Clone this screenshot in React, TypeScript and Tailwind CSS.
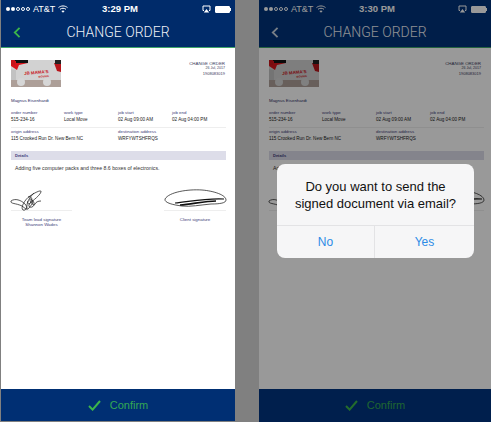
const sans = 'font-["Liberation_Sans",Arial,sans-serif]'

const Signal = () => (
  <span className="flex gap-[1px]">
    <span className="w-[4px] h-[4px] rounded-full bg-white" />
    <span className="w-[4px] h-[4px] rounded-full bg-white" />
    <span className="w-[4px] h-[4px] rounded-full border-[0.5px] border-white" />
    <span className="w-[4px] h-[4px] rounded-full border-[0.5px] border-white" />
    <span className="w-[4px] h-[4px] rounded-full border-[0.5px] border-white" />
  </span>
)

const Wifi = () => (
  <svg width="10" height="8" viewBox="0 0 10 8" fill="none" stroke="white" strokeWidth="1">
    <path d="M0.5 2.6C3 0.4 7 0.4 9.5 2.6" />
    <path d="M2 4.3C3.8 2.9 6.2 2.9 8 4.3" />
    <path d="M5 7.8L3.4 5.9C4.4 5.2 5.6 5.2 6.6 5.9Z" fill="white" stroke="none" />
  </svg>
)

const Airplay = () => (
  <svg width="9" height="8" viewBox="0 0 9 8" fill="none">
    <path d="M2 5.5H1V1H8V5.5H7" stroke="white" strokeWidth="1" />
    <path d="M4.5 4L7.2 7.6H1.8Z" fill="white" />
  </svg>
)

const Battery = () => (
  <span className="flex items-center">
    <span className="w-[15px] h-[7px] border-[0.5px] border-white bg-white rounded-[1px]" />
    <span className="w-[1px] h-[3px] bg-white" />
  </span>
)

const Logo = () => (
  <svg width="50" height="27" viewBox="0 0 50 27" className="block">
    <rect width="50" height="27" fill="#d2d2d2" />
    <rect y="20" width="50" height="7" fill="#ad9f98" />
    <path d="M0 0H17V3L8 5L6 10L0 6Z" fill="#d8131a" />
    <path d="M0 0H17V3H5V1H0Z" fill="#111" />
    <path d="M0 0H4V5H0Z" fill="#c9141a" />
    <path d="M43 3H50V12L46 11Z" fill="#b8141a" />
    <path d="M44 0H50V4H44Z" fill="#222" />
    <path d="M0 9L5 10L5 20H0Z" fill="#c2c2c2" />
    <circle cx="10" cy="22" r="4" fill="#d6d6d6" />
    <circle cx="36" cy="22" r="4" fill="#d6d6d6" />
    <g transform="rotate(-5 25 12)">
      <text x="13" y="14" fontSize="4.4" fontWeight="700" fill="#c8141c" fontFamily="Liberation Sans">JB MAMA&apos;S</text>
      <text x="27" y="18" fontSize="2.6" fontWeight="700" fill="#c8141c" fontFamily="Liberation Sans">MOVING</text>
    </g>
  </svg>
)

const LeadSignature = () => (
  <svg width="34" height="24" viewBox="0 0 34 24" fill="none" stroke="#111" strokeWidth="0.7" className="-ml-px">
    <path d="M1 12C5 9 11 11 15 15C18 18 16 22 13 21C10 19 15 10 20 7C24 4 32 0 31 3C29 8 20 13 19 16C18 19 23 19 24 16C25 13 21 9 20 10C19 12 24 18 25 15C26 13 28 12 31 12" />
    <path d="M1 12C0 15 6 14 12 17C15 19 17 22 19 19C21 16 24 14 22 11" />
    <path d="M24 4C20 8 16 13 17 20" />
    <path d="M18 8C21 7 23 9 21 13C19 16 17 15 18 12" />
  </svg>
)

const ClientSignature = () => (
  <svg width="64" height="20" viewBox="0 0 64 20" fill="none" stroke="#111" strokeWidth="0.7">
    <path d="M1 10C5 3 24 0 38 1C50 2 62 6 62 11C62 14 56 15 47 15C36 16 26 18 18 17C10 16 0 14 1 10Z" />
    <path d="M11 14C24 13 40 9 60 10" strokeWidth="1.2" />
    <path d="M16 16C28 15 42 12 52 12" strokeWidth="1.6" />
  </svg>
)

const Field = ({ label, value, w }: { label: string; value: string; w: string }) => (
  <div className={`${w} h-[15px]`}>
    <div className="text-[4.4px] leading-[6px] text-[#3c3c78]">{label}</div>
    <div className="text-[4.6px] leading-[7px] text-[#222]">{value}</div>
  </div>
)

const OrderDocument = () => (
  <div className="flex-1 bg-white pt-[12px] px-[10px]">
    <div className="flex justify-between">
      <Logo />
      <div className="text-right pt-[1px] text-[#3c3c60]">
        <div className="text-[4.4px] leading-[5px]">CHANGE ORDER</div>
        <div className="text-[3.6px] leading-[5px]">26 Jul, 2017</div>
        <div className="text-[4px] leading-[5px]">1908083019</div>
      </div>
    </div>
    <div className="mt-[11px] text-[4.4px] leading-[6px] text-[#2c2c64]">Magnus Eisenhardt</div>
    <div className="mt-[6px] flex border-b border-[#eeeeee] pb-[2px] w-[215px]">
      <Field label="order number" value="515-234-16" w="w-[53px]" />
      <Field label="work type" value="Local Move" w="w-[54px]" />
      <Field label="job start" value="02 Aug 09:00 AM" w="w-[54px]" />
      <Field label="job end" value="02 Aug 04:00 PM" w="w-[54px]" />
    </div>
    <div className="mt-[1px] flex w-[215px]">
      <Field label="origin address" value="115 Crooked Run Dr. New Bern NC" w="w-[107px]" />
      <Field label="destination address" value="WRFYWTSHFRQS" w="w-[108px]" />
    </div>
    <div className="mt-[7px] w-[215px] h-[9px] bg-[#dddde9] pl-[4px] text-[4px] leading-[9px] font-bold text-[#3c3c78]">Details</div>
    <div className="mt-[5px] pl-[4px] text-[5.2px] leading-[6px] text-[#333]">Adding five computer packs and three 8.6 boxes of electronics.</div>
    <div className="mt-[18px] flex justify-between w-[215px]">
      <div className="w-[61px]">
        <div className="h-[22px] border-b border-[#eeeeee]">
          <LeadSignature />
        </div>
        <div className="mt-[6px] text-center text-[4.4px] leading-[5px] text-[#3c3c78]">
          <div>Team lead signature</div>
          <div>Shannon Wades</div>
        </div>
      </div>
      <div className="w-[62px]">
        <div className="h-[22px] border-b border-[#eeeeee]">
          <ClientSignature />
        </div>
        <div className="mt-[6px] text-center text-[4.4px] leading-[5px] text-[#3c3c78]">Client signature</div>
      </div>
    </div>
  </div>
)

const EmailDialog = () => (
  <div className="absolute left-[18px] top-[164px] w-[197px] h-[94px] rounded-[8px] bg-[#f6f6f7] flex flex-col">
    <div className="h-[61px] flex flex-col justify-center items-center text-[13px] leading-[17px] text-[#111]">
      <div>Do you want to send the</div>
      <div>signed document via email?</div>
    </div>
    <div className="flex-1 flex border-t border-[#e3e3e5] text-[12px] text-[#2c8be6]">
      <div className="w-[98px] border-r border-[#e3e3e5] flex items-center justify-center">No</div>
      <div className="flex-1 flex items-center justify-center">Yes</div>
    </div>
  </div>
)

const Phone = ({ time, width, dimmed }: { time: string; width: string; dimmed?: boolean }) => (
  <div className={`relative ${width} ${dimmed ? 'h-[422px]' : 'h-[421px]'} flex flex-col`}>
    <div className={`${dimmed ? 'bg-[#00327a]' : 'bg-[#002b6a]'} h-[48px] shrink-0 text-white border-b border-[#3fa66a]`}>
      <div className="h-[18px] flex items-center justify-between pl-[5px] pr-[4px] relative">
        <div className="flex items-center gap-[3px]">
          <Signal />
          <span className="text-[9px] leading-none">AT&amp;T</span>
          <Wifi />
        </div>
        <span className="absolute left-[4px] right-0 text-center text-[9.5px] font-bold leading-none">{time}</span>
        <div className="flex items-center gap-[4px]">
          <Airplay />
          <Battery />
        </div>
      </div>
      <div className="h-[29px] relative flex items-center justify-center font-['Roboto',sans-serif] font-light text-[14px] text-[#eef1f6]">
        <svg className="absolute left-[12px] top-[9px]" width="8" height="11" viewBox="0 0 8 12" fill="none" stroke={dimmed ? '#c8d4e0' : '#3cb54a'} strokeWidth="2">
          <path d="M6.8 1L1.6 6L6.8 11" />
        </svg>
        CHANGE ORDER
      </div>
    </div>
    <OrderDocument />
    <div className={`${dimmed ? 'h-[33px] bg-[#003580]' : 'h-[32px] bg-[#002f73]'} shrink-0 flex items-center justify-center gap-[9px] text-[11px] text-[#34a853]`}>
      <svg width="13" height="11" viewBox="0 0 13 11" fill="none" stroke="#3cb54a" strokeWidth="2">
        <path d="M1 6L4.6 9.6L12 1" />
      </svg>
      Confirm
    </div>
    {dimmed && <div className="absolute inset-0 bg-black/40" />}
    {dimmed && <EmailDialog />}
  </div>
)

const App = () => (
  <div className={`w-[491px] h-[422px] overflow-hidden bg-[#808080] flex pl-px ${sans}`}>
    <Phone time="3:29 PM" width="w-[234px]" />
    <div className="w-[24px] shrink-0" />
    <Phone time="3:30 PM" width="w-[232px]" dimmed />
  </div>
)

export default App
